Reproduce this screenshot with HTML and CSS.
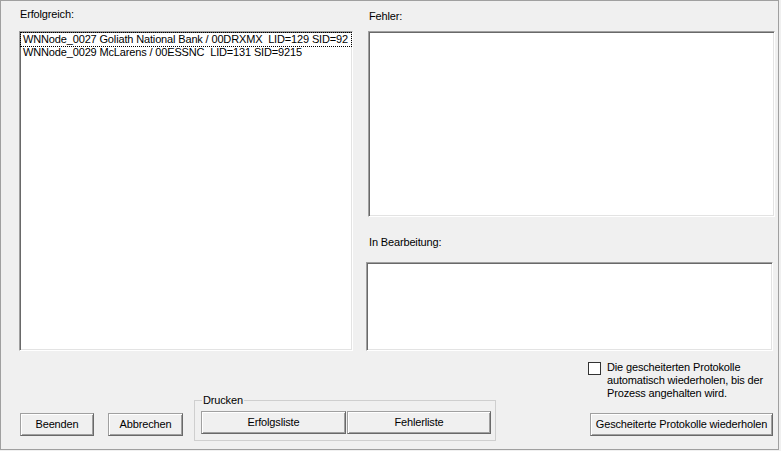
FILE: index.html
```html
<!DOCTYPE html>
<html>
<head>
<meta charset="utf-8">
<link rel="stylesheet" href="styles.css">
</head>
<body>
<div class="window">
  <div class="main">
    <div class="col-left">
      <div class="label label-ok">Erfolgreich:</div>
      <div class="listbox list-ok">
        <div class="item focused">WNNode_0027 Goliath National Bank / 00DRXMX  LID=129 SID=92</div>
        <div class="item">WNNode_0029 McLarens / 00ESSNC  LID=131 SID=9215</div>
      </div>
    </div>
    <div class="col-right">
      <div class="label label-err">Fehler:</div>
      <div class="listbox list-err"></div>
      <div class="label label-busy">In Bearbeitung:</div>
      <div class="listbox list-busy"></div>
    </div>
  </div>
  <div class="bottom">
    <button class="btn btn-end">Beenden</button>
    <button class="btn btn-cancel">Abbrechen</button>
    <fieldset class="group">
      <legend class="group-title">Drucken</legend>
      <div class="group-row">
        <button class="btn btn-okl">Erfolgsliste</button>
        <button class="btn btn-errl">Fehlerliste</button>
      </div>
    </fieldset>
    <div class="col-retry">
      <label class="check-row">
        <span class="checkbox"></span>
        <span class="check-text">Die gescheiterten Protokolle<br>automatisch wiederholen, bis der<br>Prozess angehalten wird.</span>
      </label>
      <button class="btn btn-retry">Gescheiterte Protokolle wiederholen</button>
    </div>
  </div>
</div>
</body>
</html>
```

FILE: styles.css
```css
html, body {
  margin: 0;
  padding: 0;
  background: #f0f0f0;
}
body {
  font-family: "Liberation Sans", Arial, sans-serif;
  font-size: 11px;
  line-height: 13px;
  color: #000;
  letter-spacing: -0.15px;
}
.window {
  width: 779px;
  height: 450px;
  box-sizing: border-box;
  border: 1px solid #a0a0a0;
  background: #f0f0f0;
  padding-left: 18px;
}
.main {
  display: flex;
  height: 350px;
}
.col-left {
  width: 334px;
  display: flex;
  flex-direction: column;
}
.col-right {
  width: 409px;
  margin-left: 13px;
  display: flex;
  flex-direction: column;
}
.label {
  height: 13px;
  white-space: nowrap;
}
.label-ok {
  margin-top: 7px;
  padding-left: 1px;
}
.label-err {
  margin-top: 9px;
  padding-left: 3px;
}
.label-busy {
  margin-top: 19px;
  padding-left: 3px;
}
.listbox {
  background: #fff;
  box-sizing: border-box;
  border: 1px solid;
  border-color: #a0a0a0 #ffffff #ffffff #a0a0a0;
  box-shadow: inset 1px 1px 0 #696969, inset -1px -1px 0 #e3e3e3;
  overflow: hidden;
}
.list-ok {
  margin-top: 10px;
  height: 320px;
  padding: 1px 1px;
}
.list-err {
  margin-top: 8px;
  margin-left: 2px;
  width: 407px;
  height: 186px;
}
.list-busy {
  margin-top: 13px;
  width: 407px;
  height: 89px;
}
.item {
  height: 13px;
  padding-left: 2px;
  white-space: pre;
  overflow: hidden;
}
.focused {
  outline: 1px dotted #000;
  outline-offset: 0;
  height: 13px;
}
.bottom {
  display: flex;
  align-items: flex-start;
}
.btn {
  font-family: "Liberation Sans", Arial, sans-serif;
  font-size: 11px;
  letter-spacing: -0.15px;
  line-height: 13px;
  color: #000;
  background: #f0f0f0;
  box-sizing: border-box;
  height: 23px;
  padding: 0;
  margin: 0;
  border: 1px solid;
  border-color: #a0a0a0 #696969 #696969 #a0a0a0;
  box-shadow: inset 1px 1px 0 #ffffff, inset -1px -1px 0 #a0a0a0;
  white-space: nowrap;
}
.btn-end {
  margin-top: 62px;
  margin-left: 1px;
  width: 74px;
}
.btn-cancel {
  margin-top: 62px;
  margin-left: 14px;
  width: 75px;
}
.group {
  margin: 43px 0 0 11px;
  padding: 0 0 6px 6px;
  width: 302px;
  box-sizing: border-box;
  border: 1px solid #cfcfcf;
  min-width: 0;
}
.group-title {
  padding: 0 1px;
  margin-left: 1px;
  line-height: 13px;
}
.group-row {
  display: flex;
  gap: 1px;
  margin-top: 4px;
}
.btn-okl {
  width: 145px;
}
.btn-errl {
  width: 144px;
}
.col-retry {
  margin-left: auto;
  margin-right: 5px;
  width: 185px;
  display: flex;
  flex-direction: column;
}
.check-row {
  display: flex;
  align-items: flex-start;
  margin-top: 10px;
}
.checkbox {
  width: 13px;
  height: 13px;
  box-sizing: border-box;
  border: 1px solid #333;
  background: #fff;
  margin-top: 1px;
  flex: none;
}
.check-text {
  margin-left: 6px;
  line-height: 13px;
  white-space: nowrap;
}
.btn-retry {
  margin-top: 13px;
  margin-left: 2px;
  width: 183px;
}
```
